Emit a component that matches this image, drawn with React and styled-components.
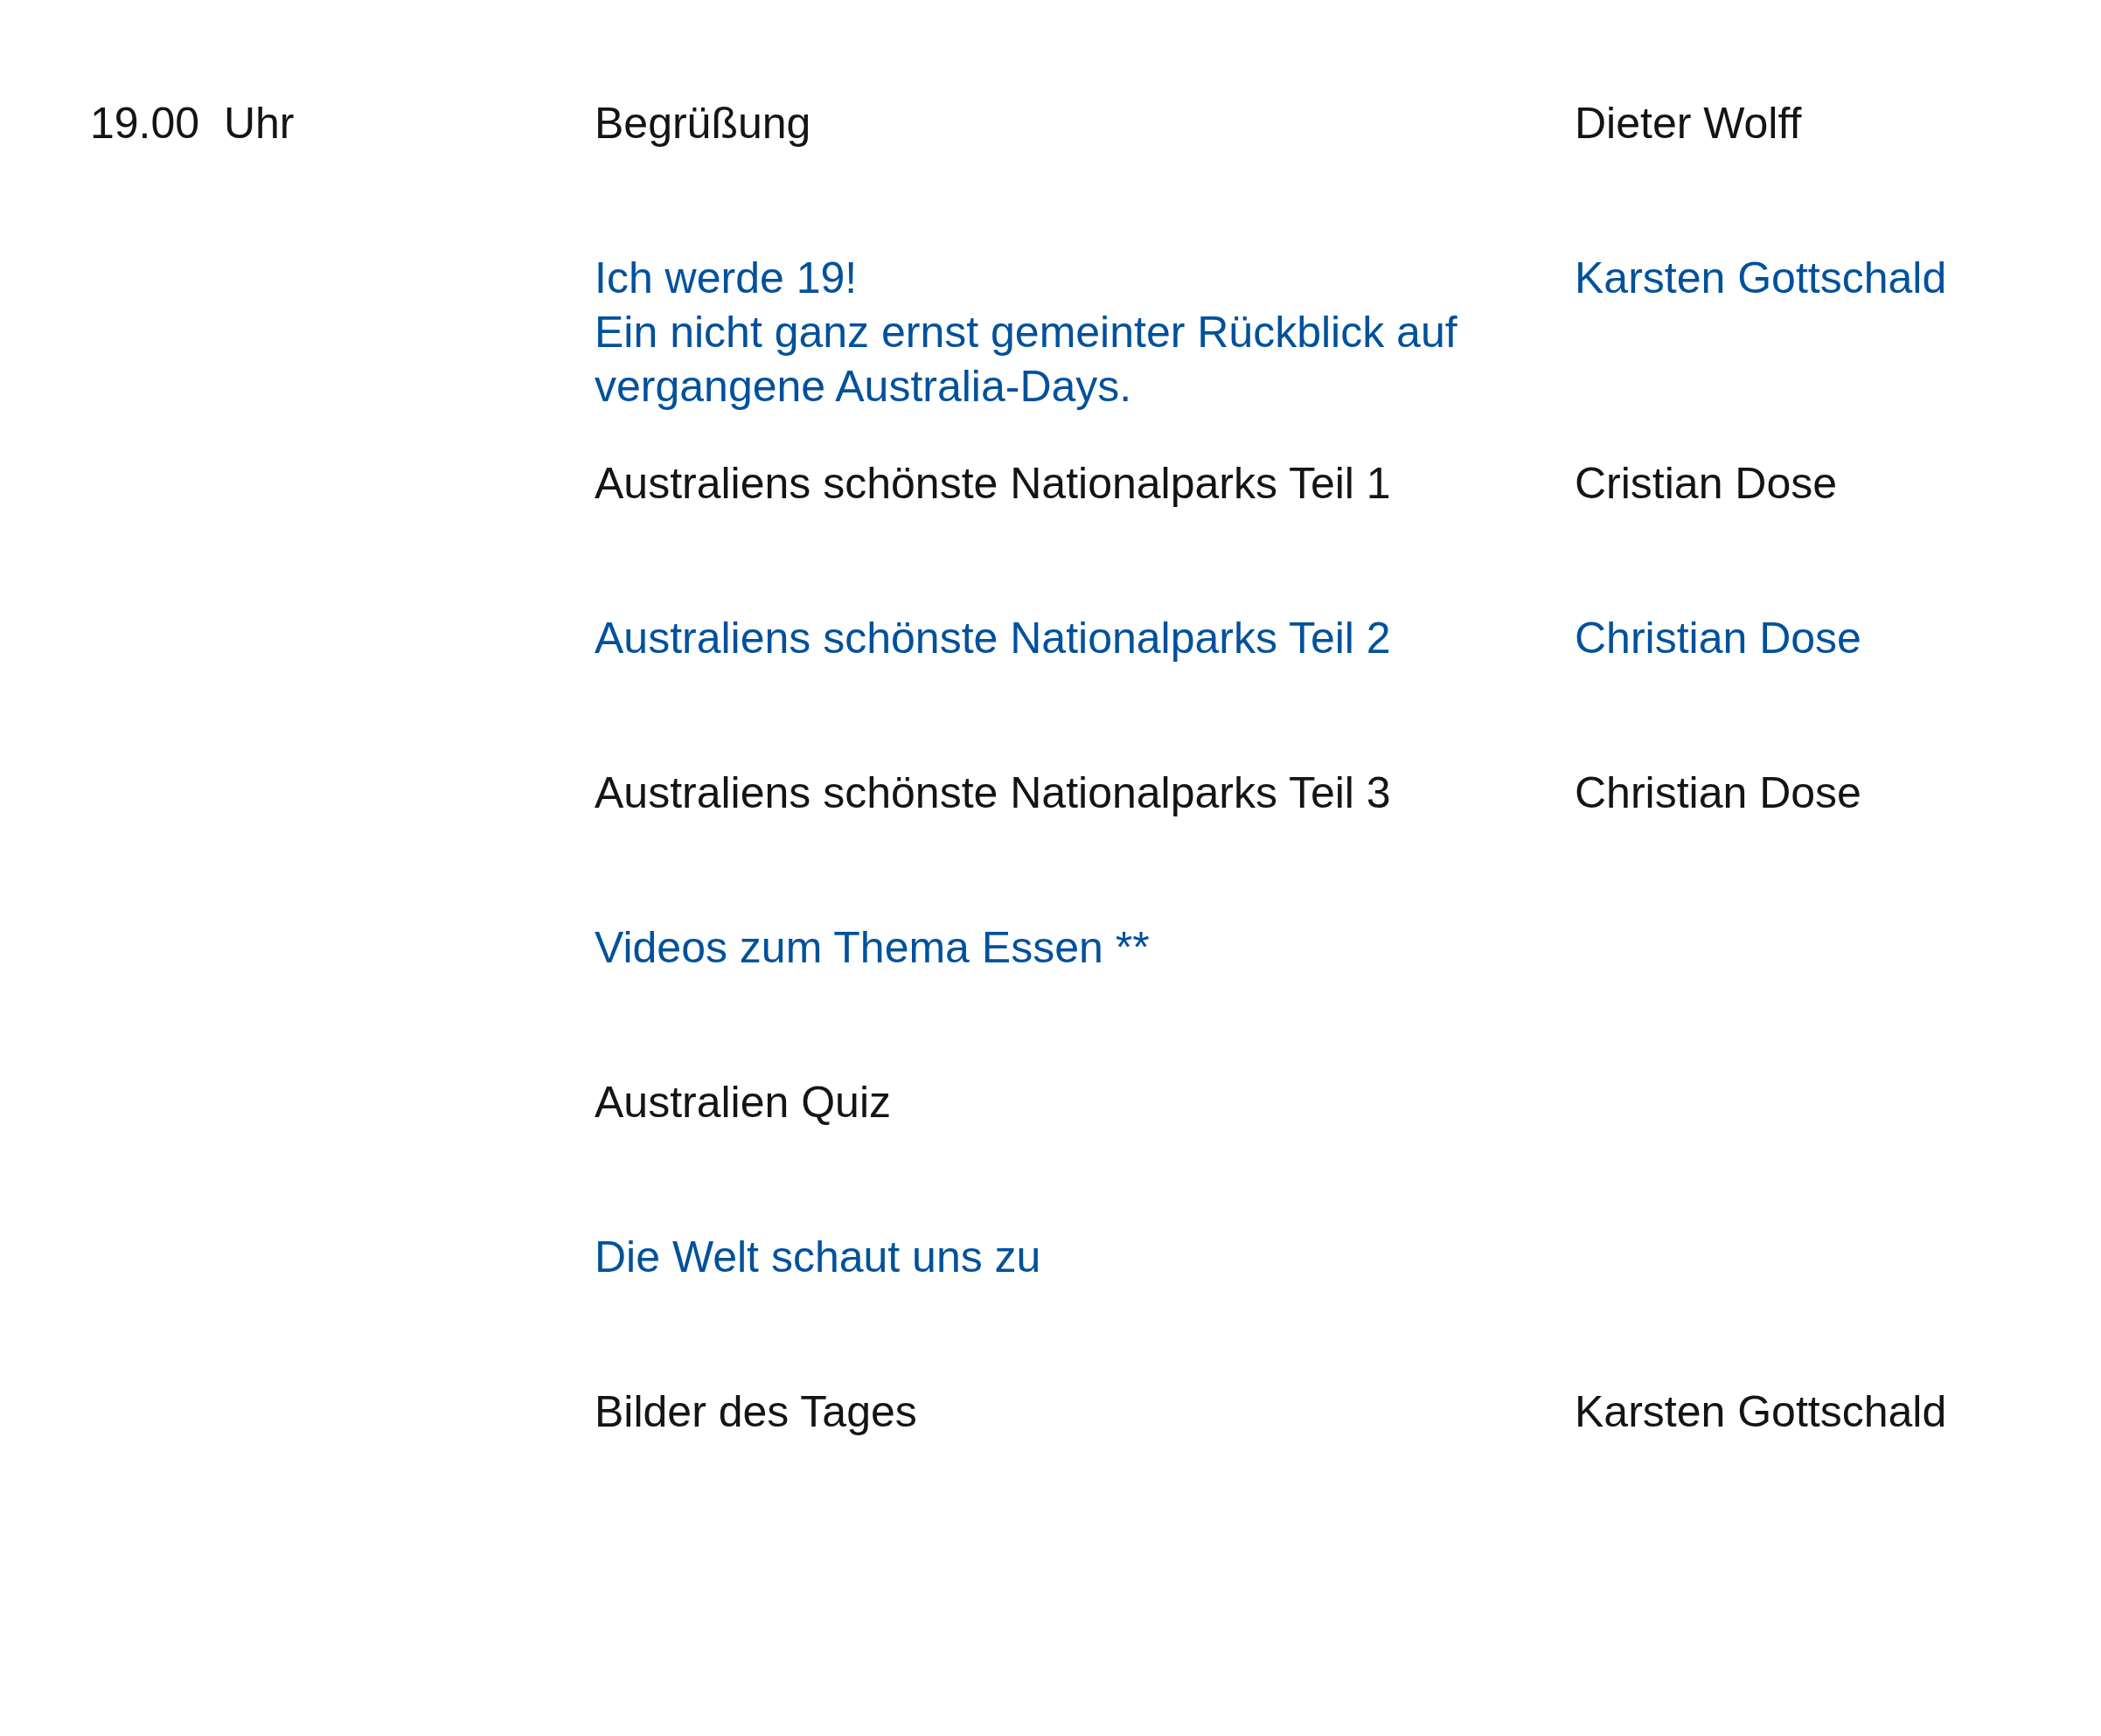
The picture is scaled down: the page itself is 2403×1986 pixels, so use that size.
import React from 'react'
import styled, { createGlobalStyle } from 'styled-components'

const GlobalStyle = createGlobalStyle`
  html, body {
    margin: 0;
    padding: 0;
    background: #ffffff;
  }
  body {
    font-family: "Liberation Sans", Arial, sans-serif;
  }
`

const Page = styled.div`
  padding: 110px 0 0 103px;
  min-height: 1986px;
  box-sizing: border-box;
`

const Row = styled.div`
  display: grid;
  grid-template-columns: 577px 1121px 1fr;
  min-height: 177px;
  padding-bottom: 49px;
  box-sizing: border-box;
  font-size: 50px;
  line-height: 62px;
  color: ${p => (p.$blue ? '#00519c' : '#141414')};
`

const Time = styled.div`
  white-space: pre;
`

const Title = styled.div``

const Speaker = styled.div`
  white-space: nowrap;
`

const program = [
  { time: '19.00  Uhr', title: ['Begrüßung'], speaker: 'Dieter Wolff' },
  {
    title: [
      'Ich werde 19!',
      'Ein nicht ganz ernst gemeinter Rückblick auf',
      'vergangene Australia-Days.',
    ],
    speaker: 'Karsten Gottschald',
    blue: true,
  },
  { title: ['Australiens schönste Nationalparks Teil 1'], speaker: 'Cristian Dose' },
  { title: ['Australiens schönste Nationalparks Teil 2'], speaker: 'Christian Dose', blue: true },
  { title: ['Australiens schönste Nationalparks Teil 3'], speaker: 'Christian Dose' },
  { title: ['Videos zum Thema Essen **'], blue: true },
  { title: ['Australien Quiz'] },
  { title: ['Die Welt schaut uns zu'], blue: true },
  { title: ['Bilder des Tages'], speaker: 'Karsten Gottschald' },
]

export default function App() {
  return (
    <>
      <GlobalStyle />
      <Page>
        {program.map((item, i) => (
          <Row key={i} $blue={item.blue}>
            <Time>{item.time || ''}</Time>
            <Title>
              {item.title.map((line, j) => (
                <React.Fragment key={j}>
                  {j > 0 && <br />}
                  {line}
                </React.Fragment>
              ))}
            </Title>
            <Speaker>{item.speaker || ''}</Speaker>
          </Row>
        ))}
      </Page>
    </>
  )
}
